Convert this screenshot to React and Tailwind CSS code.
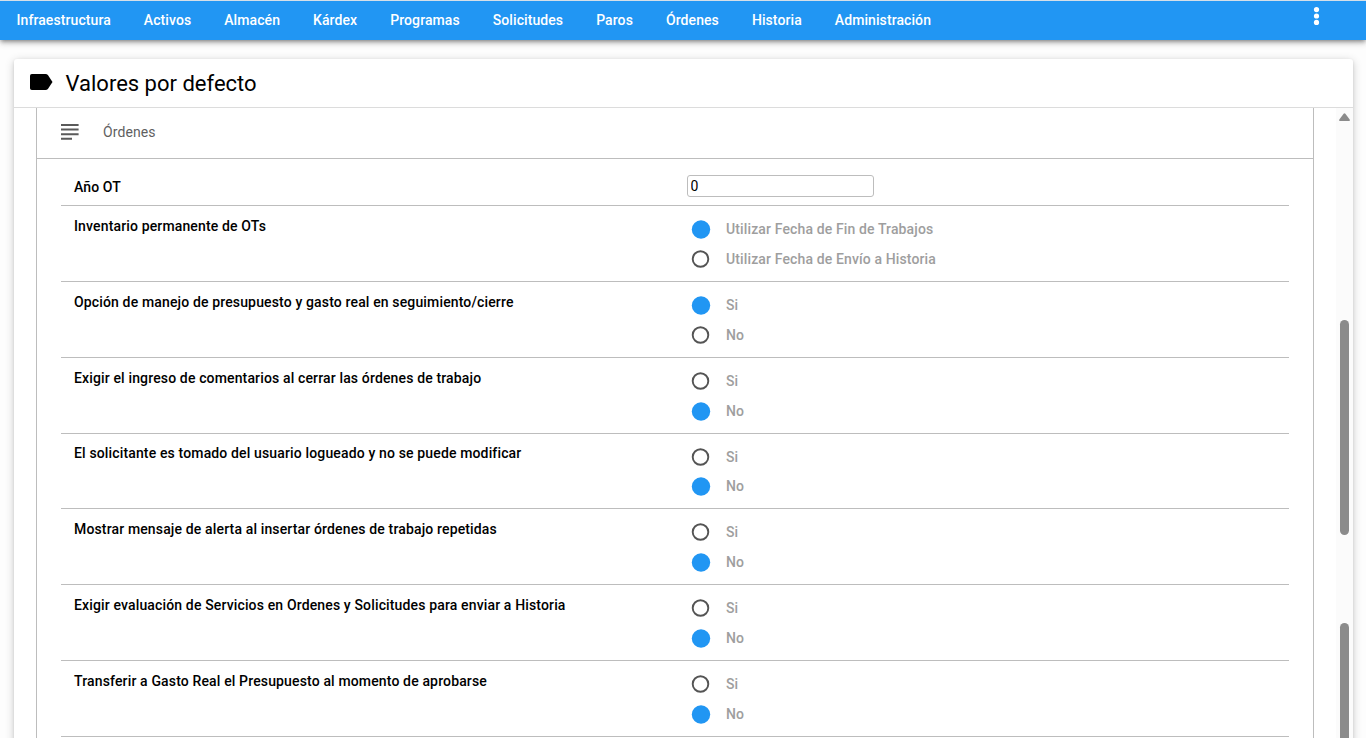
import React from "react";

const NAV = ["Infraestructura", "Activos", "Almacén", "Kárdex", "Programas", "Solicitudes", "Paros", "Órdenes", "Historia", "Administración"];

const ROWS = [
  { label: "Inventario permanente de OTs", options: ["Utilizar Fecha de Fin de Trabajos", "Utilizar Fecha de Envío a Historia"], selected: 0 },
  { label: "Opción de manejo de presupuesto y gasto real en seguimiento/cierre", options: ["Si", "No"], selected: 0 },
  { label: "Exigir el ingreso de comentarios al cerrar las órdenes de trabajo", options: ["Si", "No"], selected: 1 },
  { label: "El solicitante es tomado del usuario logueado y no se puede modificar", options: ["Si", "No"], selected: 1 },
  { label: "Mostrar mensaje de alerta al insertar órdenes de trabajo repetidas", options: ["Si", "No"], selected: 1 },
  { label: "Exigir evaluación de Servicios en Ordenes y Solicitudes para enviar a Historia", options: ["Si", "No"], selected: 1 },
  { label: "Transferir a Gasto Real el Presupuesto al momento de aprobarse", options: ["Si", "No"], selected: 1 },
];

function Radio({ text, on }) {
  return (
    <div className="flex h-[29.8px] items-center">
      <svg className="h-5 w-5 shrink-0" viewBox="0 0 20 20">
        {on ? (
          <circle cx="10" cy="10.5" r="9.2" fill="#2196f3" />
        ) : (
          <circle cx="9.5" cy="10" r="7.8" fill="none" stroke="#545454" strokeWidth="1.9" />
        )}
      </svg>
      <span className="ml-[15px] text-[14px] leading-5 tracking-[0.13px] text-[#9e9e9e]">{text}</span>
    </div>
  );
}

function Row({ label, options, selected }) {
  return (
    <div className="flex h-[75.8px] border-b border-[#bdbdbd] pl-[13px]">
      <div className="w-[617px] shrink-0 pt-[9.9px] leading-5 tracking-[0.145px]">{label}</div>
      <div className="pt-[8.1px]">
        {options.map((o, i) => (
          <Radio key={o} text={o} on={i === selected} />
        ))}
      </div>
    </div>
  );
}

export default function App() {
  return (
    <div className="flex h-[738px] w-[1366px] flex-col overflow-hidden bg-[#fdfdfd] font-['Roboto',sans-serif] text-[14px] font-medium tracking-[0.1px] text-black">
      <header className="z-10 flex h-10 shrink-0 justify-between border-t border-[#d5dfe8] bg-[#2196f3] pl-[16.5px] pr-[46px] text-white shadow-[0_2px_4px_-1px_rgba(0,0,0,0.4),0_4px_5px_0_rgba(0,0,0,0.12),0_1px_10px_0_rgba(0,0,0,0.1)]">
        <nav className="flex items-center gap-[33px] tracking-[0.085px]">
          {NAV.map((n) => (
            <span key={n}>{n}</span>
          ))}
        </nav>
        <svg className="mt-[5px] h-5 w-[7px]" viewBox="0 0 7 20" fill="white">
          <circle cx="3.5" cy="3.6" r="2.6" />
          <circle cx="3.5" cy="10" r="2.6" />
          <circle cx="3.5" cy="16.4" r="2.6" />
        </svg>
      </header>

      <main className="ml-[14px] mt-[19px] flex h-[720px] w-[1339px] shrink-0 flex-col rounded-t-[3px] bg-white shadow-[0_2px_10px_rgba(0,0,0,0.2),0_1px_3px_rgba(0,0,0,0.1)]">
        <div className="flex h-[49px] shrink-0 items-center border-b border-[#dcdcdc] pl-4">
          <svg className="mb-[2px] h-4 w-[23px]" viewBox="0 0 23 16">
            <path d="M1.8 0H15.5Q17 0 17.9 1.1L22.5 8L17.9 14.9Q17 16 15.5 16H1.8Q0 16 0 14.2V1.8Q0 0 1.8 0Z" />
          </svg>
          <h1 className="ml-[12.5px] text-[22px] font-normal tracking-normal">Valores por defecto</h1>
        </div>

        <div className="flex min-h-0 grow">
          <section className="ml-[22px] w-[1278px] shrink-0 border-x border-[#bdbdbd]">
            <div className="flex h-[51px] items-center border-b border-[#bdbdbd] pb-[2px] pl-6 text-[#5f5f5f]">
              <svg className="h-4 w-[18px] shrink-0" viewBox="0 0 18 16" fill="#5a5a5a">
                <path d="M0 0h17.6v2H0zM0 4.6h17.6v2H0zM0 9.2h17.6v2H0zM0 13.8h11v2H0z" />
              </svg>
              <span className="ml-6 font-normal">Órdenes</span>
            </div>
            <div className="ml-6 w-[1228px]">
              <div className="flex h-[47.2px] border-b border-[#bdbdbd] pl-[13px]">
                <div className="w-[612.5px] shrink-0 pt-[18px] leading-5">Año OT</div>
                <input
                  defaultValue="0"
                  className="mt-4 h-[22px] w-[187px] rounded-[3px] border border-[#bdbdbd] pl-[3px] font-normal outline-none"
                />
              </div>
              {ROWS.map((r) => (
                <Row key={r.label} {...r} />
              ))}
            </div>
          </section>

          <div className="ml-[22px] flex w-[17px] flex-col items-center bg-[#fbfbfb]">
            <svg className="mt-[5px] h-2 w-[11px] shrink-0" viewBox="0 0 11 8" fill="#8b8b8b">
              <path d="M4.6 .7Q5.5-.4 6.4.7L10.7 6.4Q11.2 8 9.8 8H1.2Q-.2 8 .3 6.4Z" />
            </svg>
            <div className="mt-[199px] h-[215px] w-[9px] shrink-0 rounded-full bg-[#8b8b8b]" />
            <div className="mt-[88px] h-[140px] w-[9px] shrink-0 rounded-t-full bg-[#8b8b8b]" />
          </div>
        </div>
      </main>
    </div>
  );
}
